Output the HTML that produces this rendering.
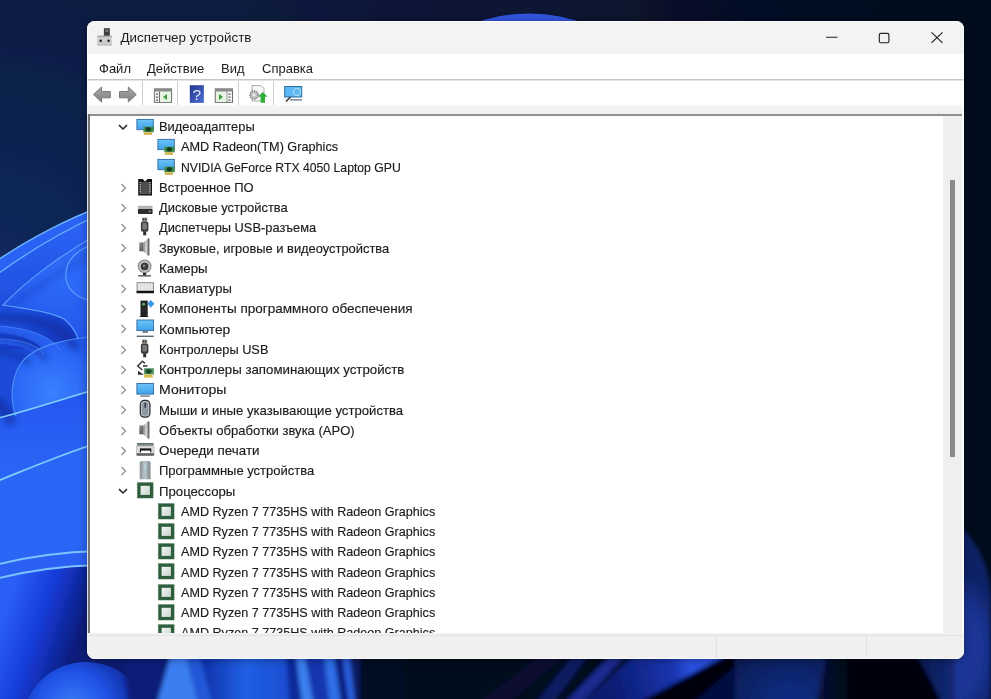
<!DOCTYPE html>
<html><head><meta charset="utf-8">
<style>
html,body{margin:0;padding:0;width:991px;height:699px;overflow:hidden;background:#0b1a3a;}
body{position:relative;font-family:"Liberation Sans",sans-serif;}
#wp{position:absolute;left:0;top:0;width:991px;height:699px;}
#win{position:absolute;left:87px;top:21px;width:877px;height:638px;border-radius:8px;background:#f3f3f3;overflow:hidden;}
.abs{position:absolute;}
#titlebar{position:absolute;left:0;width:878px;top:-1px;height:34px;background:#f3f3f3;}
#title{position:absolute;left:33.5px;top:10px;font-size:13.4px;color:#1b1b1b;white-space:nowrap;}
#menubar{position:absolute;left:0;width:878px;top:33px;height:25px;background:#fff;border-bottom:1px solid #c6c6c6;box-shadow:0 1px 0 #e4e4e4;}
.mi{position:absolute;top:7.2px;font-size:13px;color:#1b1b1b;white-space:nowrap;}
#toolbar{position:absolute;left:0;width:878px;top:60px;height:24px;background:#fff;}
#band{position:absolute;left:0;width:878px;top:84px;height:9px;background:linear-gradient(#f7f7f7,#eeeeee);}
#tree{position:absolute;left:0;width:878px;top:93px;height:519px;background:#fff;overflow:hidden;}
#tree .bt{position:absolute;left:0;top:0;width:875px;height:2px;background:#8f8f8f;}
#tree .bl0{position:absolute;left:0;top:0;width:1px;height:519px;background:#aab4cc;}
#tree .bl{position:absolute;left:1px;top:0;width:2px;height:519px;background:#747474;}
.t{position:absolute;font-size:13px;color:#1b1b1b;-webkit-text-stroke:0.15px #1b1b1b;white-space:nowrap;transform-origin:0 0;line-height:normal;}
.ic{position:absolute;overflow:visible;}
#sb{position:absolute;left:856px;top:2px;width:19px;height:517px;background:#efefef;}
#thumb{position:absolute;left:7px;top:64px;width:5px;height:277px;background:#8a8a8a;}
#status{position:absolute;left:0;width:878px;top:612px;height:26px;background:#f0f0f0;}
#status .sl{position:absolute;left:0;top:2px;width:878px;height:1px;background:#e2e2e2;}
#status .sep{position:absolute;top:3px;width:1px;height:23px;background:#e0e0e0;}
#win{box-shadow:0 1px 8px rgba(0,0,0,0.35);}
#edge{position:absolute;left:0;top:0;width:875px;height:636px;border:1px solid rgba(255,255,255,0.6);border-radius:8px;pointer-events:none;}
#rstrip{position:absolute;left:875px;top:86px;width:2px;height:552px;background:#fafafa;}

</style></head><body>
<svg id="wp" width="991" height="699" viewBox="0 0 991 699">
<defs>
<radialGradient id="gbg" cx="0" cy="260" r="1000" gradientUnits="userSpaceOnUse">
<stop offset="0" stop-color="#12295c"/><stop offset="0.25" stop-color="#0c1d44"/><stop offset="0.6" stop-color="#081431"/><stop offset="1" stop-color="#040a1a"/>
</radialGradient>
<radialGradient id="gpet" cx="52" cy="392" r="55" gradientUnits="userSpaceOnUse">
<stop offset="0" stop-color="#3a80ff"/><stop offset="1" stop-color="#245cf0"/>
</radialGradient>
<radialGradient id="gleaf" cx="60" cy="270" r="70" gradientUnits="userSpaceOnUse">
<stop offset="0" stop-color="#2f6cf8"/><stop offset="1" stop-color="#2458ec"/>
</radialGradient>
<linearGradient id="glow" x1="10" y1="600" x2="85" y2="625" gradientUnits="userSpaceOnUse">
<stop offset="0" stop-color="#2a5ef6"/><stop offset="0.45" stop-color="#163cd8"/><stop offset="1" stop-color="#0a1a78"/>
</linearGradient>
<radialGradient id="gsph" cx="72" cy="708" r="72" gradientUnits="userSpaceOnUse">
<stop offset="0" stop-color="#3a7ef8"/><stop offset="0.5" stop-color="#2052e6"/><stop offset="1" stop-color="#0c2490"/>
</radialGradient>
<radialGradient id="grsph" cx="790" cy="710" r="90" gradientUnits="userSpaceOnUse">
<stop offset="0" stop-color="#12308a"/><stop offset="1" stop-color="#081748"/>
</radialGradient>
<linearGradient id="grib2" x1="0" y1="230" x2="0" y2="320" gradientUnits="userSpaceOnUse"><stop offset="0" stop-color="#2a62f4"/><stop offset="1" stop-color="#1c4ad8"/></linearGradient>
<radialGradient id="gell" cx="95" cy="272" r="35" gradientUnits="userSpaceOnUse"><stop offset="0" stop-color="#2a64f6"/><stop offset="1" stop-color="#2e6af8"/></radialGradient>
<linearGradient id="gshade" x1="0" y1="308" x2="20" y2="350" gradientUnits="userSpaceOnUse"><stop offset="0" stop-color="#2256ea"/><stop offset="1" stop-color="#173cc4"/></linearGradient>
<linearGradient id="gband1" x1="0" y1="400" x2="0" y2="480" gradientUnits="userSpaceOnUse"><stop offset="0" stop-color="#2458f0"/><stop offset="1" stop-color="#2c66f6"/></linearGradient>
<radialGradient id="grs" cx="920" cy="650" r="90" gradientUnits="userSpaceOnUse"><stop offset="0" stop-color="#1e3ca6"/><stop offset="0.7" stop-color="#1a3494"/><stop offset="1" stop-color="#0e2266"/></radialGradient>
<linearGradient id="gband" x1="610" y1="690" x2="690" y2="665" gradientUnits="userSpaceOnUse"><stop offset="0" stop-color="#0a1a70"/><stop offset="0.8" stop-color="#1a36b0"/><stop offset="1" stop-color="#2a50e0"/></linearGradient>
<linearGradient id="gmid" x1="200" y1="0" x2="290" y2="0" gradientUnits="userSpaceOnUse"><stop offset="0" stop-color="#0e2ea8"/><stop offset="0.5" stop-color="#2060e4"/><stop offset="1" stop-color="#1a4cd0"/></linearGradient>
<filter id="blur3" x="-0.5" y="-0.5" width="2" height="2"><feGaussianBlur stdDeviation="3"/></filter>
<filter id="soft" x="-0.02" y="-0.02" width="1.04" height="1.04"><feGaussianBlur stdDeviation="0.7"/></filter>
<filter id="soft2" x="-0.1" y="-0.1" width="1.2" height="1.2"><feGaussianBlur stdDeviation="2"/></filter>
<linearGradient id="gblk" x1="815" y1="0" x2="905" y2="0" gradientUnits="userSpaceOnUse"><stop offset="0" stop-color="#081540"/><stop offset="0.4" stop-color="#02050f"/><stop offset="1" stop-color="#02040c"/></linearGradient>
<linearGradient id="gbr" x1="905" y1="0" x2="991" y2="0" gradientUnits="userSpaceOnUse"><stop offset="0" stop-color="#091646"/><stop offset="1" stop-color="#1a3698"/></linearGradient>
</defs>
<g filter="url(#soft)">
<rect x="-10" y="-10" width="1011" height="719" fill="url(#gbg)"/>
<!-- top arc peeking -->
<circle cx="529" cy="173.4" r="160" fill="#3354e0"/>
<!-- left bloom -->
<path d="M100 207 C70 218 30 238 -5 262 L-5 710 L100 710 Z" fill="#2a62f4"/>
<path d="M100 214 C70 228 30 250 -5 276 L-5 710 L100 710 Z" fill="url(#grib2)"/>
<path d="M100 233 C60 255 25 282 3 305 C25 309 50 311 64 319 C70 324 75 330 78 338 L100 340 Z" fill="url(#gleaf)"/>
<path d="M100 243 C75 248 65 262 66 277 C67 292 80 300 100 303 Z" fill="url(#gell)"/>
<path d="M-5 308 C25 304 50 311 64 319 C70 324 75 330 78 338 L100 336 L100 345 L-5 350 Z" fill="url(#gshade)"/>
<path d="M-5 333 C15 334 35 338 47 354 L60 350 C50 335 25 327 -5 326 Z" fill="#2a62f2" opacity="0.9"/>
<path d="M-5 344 C10 344 28 347 36 356 L44 354 C35 342 15 339 -5 339 Z" fill="#2a62f2" opacity="0.8"/>
<path d="M100 336 C70 338 35 345 22 362 C10 378 10 400 16 416 L-5 420 L-5 710 L100 710 Z" fill="url(#gpet)"/>
<path d="M-5 419 C30 410 60 400 100 388 L100 710 L-5 710 Z" fill="url(#gband1)"/>
<path d="M-5 482 C30 468 60 455 100 442 L100 710 L-5 710 Z" fill="#2b66f6"/>
<path d="M-5 565 C30 556 60 552 100 551 L100 710 L-5 710 Z" fill="#2960f4"/>
<path d="M-5 579 C30 570 60 566 100 565 L100 710 L-5 710 Z" fill="url(#glow)"/>
<rect x="87" y="640" width="70" height="59" fill="#0a1a70"/><circle cx="86" cy="726" r="64" fill="url(#gsph)"/>
<g fill="none" stroke="#0c2590" filter="url(#blur3)" opacity="0.55">
<path d="M-5 318 C25 316 50 322 62 332 C70 338 74 344 76 350" stroke-width="8"/>
<path d="M-5 336 C15 337 35 343 46 360" stroke-width="5"/>
<path d="M-5 352 C10 352 22 356 30 364" stroke-width="5"/>
<path d="M-5 400 C3 405 8 415 12 424" stroke-width="10"/>
<path d="M100 250 C60 270 25 295 0 315" stroke-width="6" opacity="0.4"/>
</g>
<g fill="none" stroke="#6ab4ff" stroke-width="1.5">
<path d="M100 207 C70 218 30 238 -5 262"/>
<path d="M100 214 C70 228 30 250 -5 276" stroke-width="1.3"/>
<path d="M100 233 C60 255 25 282 3 305 C25 309 50 311 64 319 C70 324 75 330 78 338" stroke-width="1.2" stroke="#5aa0ff"/>
<path d="M100 243 C75 248 65 262 66 277 C67 292 80 300 100 303" stroke-width="1.2" stroke="#5aa0ff"/>
<path d="M-5 326 C25 327 50 335 60 350" stroke-width="1" stroke="#4f8cff" opacity="0.7"/>
<path d="M-5 339 C15 339 35 342 44 354" stroke-width="1" stroke="#4f8cff" opacity="0.6"/>
<path d="M100 336 C70 338 35 345 22 362 C10 378 10 400 16 416" stroke-width="1.1" stroke="#5aa0ff" opacity="0.8"/>
<path d="M-5 419 C30 410 60 400 100 388" stroke="#7fd0ff" stroke-width="1.7"/>
<path d="M-5 482 C30 468 60 455 100 442" stroke="#7fd0ff" stroke-width="1.7"/>
<path d="M-5 565 C30 556 60 552 100 551" stroke="#7cc4ff" stroke-width="1.8"/>
<path d="M-5 579 C30 570 60 566 100 565" stroke="#7cc4ff" stroke-width="1.8"/>
</g>
<!-- bottom strip -->
</g>
<g filter="url(#soft2)">
<path d="M120 640 L175 640 L160 710 L130 710 Z" fill="#0a1c78"/>
<path d="M175 640 L182 640 L200 710 L155 710 Z" fill="#3a7ef2"/>
<path d="M182 640 L195 640 L215 710 L200 710 Z" fill="#2458d8"/>
<path d="M195 640 L290 640 L290 710 L215 710 Z" fill="url(#gmid)"/>
<path d="M285 640 L298 640 L305 710 L290 710 Z" fill="#0c2a9a"/>
<path d="M294 640 L302 640 L315 710 L303 710 Z" fill="#3a80f0"/>
<path d="M302 640 L322 640 L330 710 L315 710 Z" fill="#1434b0"/>
<path d="M322 640 L332 640 L342 710 L330 710 Z" fill="#2f70ea"/>
<path d="M332 640 L345 640 L352 710 L342 710 Z" fill="#0a1e80"/>
<path d="M340 640 L348 640 L356 710 L350 710 Z" fill="#2a60e0"/>
<path d="M348 640 L362 640 L362 710 L356 710 Z" fill="#081a60"/>
<rect x="360" y="640" width="48" height="70" fill="#030820"/>
<rect x="405" y="640" width="300" height="70" fill="#03071a"/>
<path d="M470 710 L560 640 L585 640 L500 710 Z" fill="#081034" opacity="0.9"/>
<path d="M530 710 L585 640 L600 640 L548 710 Z" fill="#0c1a60"/>
<path d="M558 710 L625 640 L640 640 L575 710 Z" fill="#1a2a90"/>
<path d="M575 710 L650 640 L755 640 L625 710 Z" fill="url(#gband)"/>
<path d="M625 710 L755 640 L765 640 L685 710 Z" fill="#02050f"/>
<path d="M685 710 L765 640 L790 640 L740 710 Z" fill="#061040"/>
<rect x="735" y="640" width="120" height="70" fill="url(#grsph)"/>
<path d="M830 640 L905 640 Q925 665 945 710 L815 710 Z" fill="url(#gblk)"/>
<path d="M905 640 L991 640 L991 710 L945 710 Q925 665 905 640 Z" fill="url(#gbr)"/>
<!-- right strip -->
<path d="M955 522 C975 538 988 562 991 592 L991 710 L955 710 Z" fill="url(#grs)"/>
</g>
</svg>

<svg width="0" height="0" style="position:absolute"><defs>
<linearGradient id="gmon" x1="0" y1="0" x2="0" y2="1"><stop offset="0" stop-color="#6cc4f8"/><stop offset="1" stop-color="#3fa2ea"/></linearGradient>
<linearGradient id="ggray" x1="0" y1="0" x2="1" y2="0"><stop offset="0" stop-color="#6e6e6e"/><stop offset="0.5" stop-color="#c9c9c9"/><stop offset="1" stop-color="#8a8a8a"/></linearGradient>
<linearGradient id="gswd" x1="0" y1="0" x2="1" y2="0"><stop offset="0" stop-color="#8a9296"/><stop offset="0.5" stop-color="#b9c8cc"/><stop offset="1" stop-color="#7d8588"/></linearGradient>
<linearGradient id="gspk1" x1="0" y1="0" x2="1" y2="1"><stop offset="0" stop-color="#9a9a9a"/><stop offset="1" stop-color="#4a4a4a"/></linearGradient>
<linearGradient id="gspk2" x1="0" y1="0" x2="1" y2="0"><stop offset="0" stop-color="#8a8a8a"/><stop offset="0.45" stop-color="#d6d6d6"/><stop offset="1" stop-color="#9a9a9a"/></linearGradient>
<linearGradient id="gcpu" x1="0" y1="0" x2="1" y2="1"><stop offset="0" stop-color="#f0f6f2"/><stop offset="0.5" stop-color="#dfe6e2"/><stop offset="1" stop-color="#c9d6cf"/></linearGradient>
<g id="i-video">
 <rect x="0.9" y="1.4" width="16.4" height="10.3" fill="url(#gmon)" stroke="#2d6aa0" stroke-width="0.9"/>
 <rect x="7.4" y="8.7" width="10.3" height="5.6" fill="#3f8a48"/>
 <ellipse cx="12.3" cy="11.2" rx="2.6" ry="2.2" fill="#123d22"/>
 <rect x="7.8" y="14.3" width="8.2" height="2.6" fill="#d6b54e"/>
</g>
<g id="i-fw">
 <path d="M2.2 0 H6.6 L9.1 2.6 L11.6 0 H16 V16.5 H2.2 Z" fill="#121212"/>
 <rect x="3.7" y="3" width="11" height="11.6" fill="#d8d8d8"/>
 <g fill="#121212"><rect x="3.7" y="4" width="1.2" height="1"/><rect x="3.7" y="6.2" width="1.2" height="1"/><rect x="3.7" y="8.4" width="1.2" height="1"/><rect x="3.7" y="10.6" width="1.2" height="1"/><rect x="3.7" y="12.8" width="1.2" height="1"/>
 <rect x="13.5" y="4" width="1.2" height="1"/><rect x="13.5" y="6.2" width="1.2" height="1"/><rect x="13.5" y="8.4" width="1.2" height="1"/><rect x="13.5" y="10.6" width="1.2" height="1"/><rect x="13.5" y="12.8" width="1.2" height="1"/></g>
 <rect x="4.9" y="2.8" width="8.6" height="12" fill="#4e4e4e"/>
</g>
<g id="i-disk">
 <rect x="1.9" y="6.7" width="14.7" height="3.6" rx="1" fill="#b4b4b4"/>
 <rect x="1.9" y="10.1" width="14.7" height="5" rx="1" fill="#2f2f2f"/>
 <rect x="12.5" y="11.6" width="2.5" height="1.6" fill="#6f8f74"/>
</g>
<g id="i-usb">
 <rect x="6" y="-1.4" width="5.2" height="4" fill="#8a8a8a"/>
 <rect x="6.8" y="-0.4" width="1.4" height="1.6" fill="#333"/><rect x="9" y="-0.4" width="1.4" height="1.6" fill="#333"/>
 <rect x="4.9" y="2.4" width="7.5" height="10.4" rx="2" fill="#3c3c3c"/>
 <rect x="6.4" y="4" width="4.5" height="6.5" rx="1" fill="#7a7a7a"/>
 <rect x="7.2" y="12.4" width="3" height="3.9" fill="#2f2f2f"/>
</g>
<g id="i-spk">
 <rect x="3.2" y="3.4" width="4.4" height="8.9" fill="url(#gspk1)"/>
 <path d="M7.6 3.4 L11.6 -0.4 H13.3 V16.4 H11.6 L7.6 12.3 Z" fill="url(#gspk2)"/>
 <rect x="11.7" y="-0.4" width="1.6" height="16.8" fill="#6a6a6a"/>
</g>
<g id="i-cam">
 <circle cx="8.6" cy="6.4" r="6.9" fill="#8d8d8d"/>
 <circle cx="8.6" cy="6.4" r="5.6" fill="#cfcfcf"/>
 <circle cx="8.6" cy="6.4" r="3.9" fill="#3e3e3e"/>
 <circle cx="8.1" cy="5.8" r="1.2" fill="#8a8a8a"/>
 <rect x="7" y="13" width="3.2" height="2" fill="#2a2a2a"/>
 <rect x="2.3" y="15" width="12.6" height="1.6" fill="#6a6a6a"/>
</g>
<g id="i-kbd">
 <rect x="0.6" y="2.2" width="17.4" height="10.9" fill="#8a8a8a"/>
 <rect x="1.5" y="3.1" width="15.6" height="7.6" fill="#d2d2d2"/>
 <g fill="#f4f4f4"><rect x="2.2" y="3.8" width="14.2" height="1.6"/><rect x="2.2" y="6.1" width="14.2" height="1.6"/><rect x="2.2" y="8.4" width="14.2" height="1.6"/></g>
 <path d="M5 3.8 V10 M8.2 3.8 V10 M11.4 3.8 V10 M14 3.8 V10" stroke="#bdbdbd" stroke-width="0.5"/>
 <rect x="0.6" y="10.9" width="17.4" height="2.3" fill="#141414"/>
</g>
<g id="i-swc">
 <rect x="4.5" y="0.6" width="7.2" height="15.2" fill="#1f1f1f"/>
 <ellipse cx="7.6" cy="4.2" rx="1.6" ry="1.8" fill="#5a9a5e"/>
 <rect x="5.5" y="8" width="5" height="0.8" fill="#3c3c3c"/><rect x="5.5" y="10.5" width="5" height="0.8" fill="#3c3c3c"/>
 <path d="M3.5 17 Q3.8 15.2 8 15.2 Q12.2 15.2 12.5 17 Z" fill="#141414"/>
 <path d="M11.8 2.6 H13.6 V0.6 H15.8 V2.6 H17.9 V5 H15.8 V7.3 H13.6 V5 H11.8 Z" fill="#3a96e6"/>
 <rect x="12.8" y="1.8" width="4" height="4" fill="#3a96e6"/>
</g>
<g id="i-mon">
 <rect x="0.9" y="-0.0" width="16.7" height="10.6" fill="url(#gmon)" stroke="#2d6aa0" stroke-width="0.9"/>
 <rect x="6.5" y="11.2" width="5.5" height="1.6" fill="#5a6f80"/>
 <rect x="0.7" y="15.6" width="17.1" height="1.4" fill="#5d6d78"/>
</g>
<g id="i-monitor">
 <rect x="0.9" y="2.5" width="16.7" height="10.6" fill="url(#gmon)" stroke="#2d6aa0" stroke-width="0.9"/>
 <rect x="4.3" y="14.4" width="9.6" height="1.3" fill="#5a6f80"/>
</g>
<g id="i-stor">
 <path d="M8.9 2.4 L6.4 0.3 L1.7 5 L6.4 9" fill="none" stroke="#3a3a3a" stroke-width="1.5"/>
 <rect x="7" y="4" width="4.4" height="1.9" fill="#5a5a5a"/>
 <path d="M2 9.7 L7.9 13.8 L2 13.8 Z" fill="#2e2e2e"/>
 <rect x="7.9" y="7.2" width="10.1" height="6.3" fill="#5c9a6a"/>
 <ellipse cx="12.6" cy="10.3" rx="3" ry="2.4" fill="#1a4a2c"/>
 <rect x="8.2" y="13.5" width="8.5" height="3.1" fill="#d9bd4a"/>
</g>
<g id="i-mouse">
 <rect x="3.7" y="-1.2" width="10.8" height="18" rx="4.6" fill="#2b2b2b"/>
 <rect x="4.9" y="0" width="8.4" height="15.6" rx="3.6" fill="#c7ccd3"/>
 <rect x="5.8" y="0.9" width="6.6" height="13.8" rx="3" fill="#8d96a3"/>
 <rect x="8.5" y="1.6" width="1.4" height="5.4" rx="0.7" fill="#2a3340"/>
</g>
<g id="i-prn">
 <rect x="0.9" y="1.2" width="16.8" height="2.8" rx="1" fill="#8d9892"/>
 <rect x="0.9" y="1.2" width="16.8" height="1.1" rx="0.5" fill="#4f5a54"/>
 <rect x="0.6" y="4" width="17.4" height="7.4" fill="#dedede" stroke="#9a9a9a" stroke-width="0.5"/>
 <rect x="3.9" y="6.4" width="11.4" height="4" fill="#161616"/>
 <rect x="5" y="8.6" width="9.2" height="3" fill="#ffffff"/>
 <rect x="0.4" y="11.2" width="17.8" height="2.6" rx="0.8" fill="#5e5e5e"/>
</g>
<g id="i-swd">
 <path d="M3.7 1.2 Q3.7 -1 6 -1 H12.2 Q14.5 -1 14.5 1.2 V17.2 H3.7 Z" fill="url(#gswd)"/>
 <rect x="8.3" y="2" width="1.6" height="6" fill="#b8dce8" opacity="0.7"/>
</g>
<g id="i-cpu">
 <rect x="1.3" y="0.5" width="15.9" height="15.6" fill="#2e5e3c"/>
 <rect x="1.3" y="0.5" width="15.9" height="15.6" fill="none" stroke="#4a7a58" stroke-width="0.7" stroke-dasharray="0.7 0.9"/>
 <rect x="4.6" y="3.8" width="9.3" height="9.1" fill="url(#gcpu)"/>
</g>

</defs></svg>
<div id="win">
  <div id="titlebar">
  <svg class="abs" style="left:0;top:0" width="40" height="34" viewBox="0 0 40 34">
<defs><linearGradient id="gti" x1="0" y1="0" x2="0" y2="1"><stop offset="0" stop-color="#9a9a9a"/><stop offset="0.25" stop-color="#d4d4d4"/><stop offset="1" stop-color="#c4c4c4"/></linearGradient></defs>
<rect x="16.9" y="8.2" width="5.9" height="8" fill="#3e3e3e"/>
<rect x="18.3" y="9.6" width="3" height="2.2" fill="#7a7a7a"/>
<rect x="10.2" y="15.6" width="14.6" height="10.2" fill="url(#gti)"/>
<circle cx="13.7" cy="20.8" r="1.2" fill="#1a1a1a"/>
<circle cx="21.6" cy="20.8" r="1.2" fill="#1a1a1a"/>
</svg>

  <div id="title">Диспетчер устройств</div>
  <svg class="abs" style="left:736px;top:10px" width="20" height="14" viewBox="0 0 20 14"><path d="M3 7.3 H14.5" stroke="#222" stroke-width="1.1"/></svg>
  <svg class="abs" style="left:789.5px;top:9.6px" width="16" height="16" viewBox="0 0 16 16"><rect x="2.3" y="3.3" width="9.6" height="9.4" rx="1.5" fill="none" stroke="#222" stroke-width="1.15"/></svg>
  <svg class="abs" style="left:842px;top:10px" width="16" height="16" viewBox="0 0 16 16"><path d="M2.5 2.3 L13.5 12.9 M13.5 2.3 L2.5 12.9" stroke="#222" stroke-width="1.15"/></svg>
  </div>
  <div id="menubar">
    <div class="mi" style="left:12px">Файл</div>
    <div class="mi" style="left:60px">Действие</div>
    <div class="mi" style="left:134px">Вид</div>
    <div class="mi" style="left:175px">Справка</div>
  </div>
  <div id="toolbar">
  <svg class="abs" style="left:0;top:-1px;overflow:visible" width="877" height="27" viewBox="0 0 877 27">
<defs>
<linearGradient id="garr" x1="0" y1="0" x2="0" y2="1"><stop offset="0" stop-color="#a8a8a8"/><stop offset="1" stop-color="#808080"/></linearGradient>
<linearGradient id="ghelp" x1="0" y1="0" x2="1" y2="1"><stop offset="0" stop-color="#23388c"/><stop offset="1" stop-color="#4d6fd4"/></linearGradient>
</defs>
<g stroke="#cfcfcf" stroke-width="1"><path d="M55.5 1 V25.5 M90.5 1 V25.5 M151.5 1 V25.5 M186.5 1 V25.5"/></g>
<!-- back -->
<path d="M6.5 14.5 L14.5 7 V11.5 H23.3 V17.8 H14.5 V22 Z" fill="url(#garr)" stroke="#7a7a7a" stroke-width="1" stroke-linejoin="round"/>
<!-- forward -->
<path d="M49.3 14.5 L41.3 7 V11.5 H32.5 V17.8 H41.3 V22 Z" fill="url(#garr)" stroke="#7a7a7a" stroke-width="1" stroke-linejoin="round"/>
<!-- icon3 -->
<rect x="67.4" y="8.9" width="17.2" height="13.5" fill="#f4f4f4" stroke="#6d6d6d" stroke-width="1"/>
<rect x="67.4" y="8.9" width="17.2" height="2.6" fill="#8a8a8a"/>
<path d="M72.5 11.5 V22.4" stroke="#6d6d6d" stroke-width="1"/>
<rect x="69" y="13.5" width="2" height="1.2" fill="#555"/><rect x="69" y="16.5" width="2" height="1.2" fill="#555"/><rect x="69" y="19.5" width="2" height="1.2" fill="#555"/>
<rect x="73" y="12" width="11" height="10" fill="#e6f4e4"/>
<path d="M76 17 L80 14 V20 Z" fill="#3f9a3f"/>
<!-- help -->
<rect x="102.8" y="5.2" width="14.1" height="17.7" fill="url(#ghelp)"/>
<text x="109.9" y="19.6" font-family="Liberation Sans" font-size="15.5" fill="#dfe8ff" text-anchor="middle">?</text>
<!-- icon5 -->
<rect x="128.3" y="8.9" width="17.2" height="13.5" fill="#f4f4f4" stroke="#6d6d6d" stroke-width="1"/>
<rect x="128.3" y="8.9" width="17.2" height="2.6" fill="#8a8a8a"/>
<path d="M139.8 11.5 V22.4" stroke="#6d6d6d" stroke-width="1"/>
<rect x="129" y="12" width="10.5" height="10" fill="#e6f4e4"/>
<path d="M136 17 L132 14 V20 Z" fill="#3f9a3f"/>
<rect x="141.5" y="13.5" width="2" height="1.2" fill="#555"/><rect x="141.5" y="16.5" width="2" height="1.2" fill="#555"/><rect x="141.5" y="19.5" width="2" height="1.2" fill="#555"/>
<!-- icon6 update driver -->
<path d="M165 5.5 H174 L177 8.5 V21 H165 Z" fill="#f6f6f6" stroke="#9a9a9a" stroke-width="0.8"/>
<circle cx="167" cy="15" r="4.2" fill="#bdbdbd" stroke="#7a7a7a" stroke-width="1.2" stroke-dasharray="1.4 1"/>
<circle cx="167" cy="15" r="1.6" fill="#f0f0f0"/>
<path d="M175.8 12 L180.6 16.8 H178 V22.8 H173.6 V16.8 H171 Z" fill="#2fae3a"/>
<!-- icon7 scan -->
<rect x="197.7" y="6.5" width="17" height="10.5" fill="#5cb8f2" stroke="#2f6c9c" stroke-width="1"/>
<circle cx="210" cy="11.8" r="3.6" fill="none" stroke="#a8dcfa" stroke-width="1.1"/>
<path d="M203.5 17 L199 21.5" stroke="#3a3a3a" stroke-width="1.6"/>
<path d="M203 19.8 H215" stroke="#607080" stroke-width="1.3"/>
</svg>

  </div>
  <div id="band"></div>
  <div id="tree">
    <div class="bt"></div><div class="bl0"></div><div class="bl"></div>
    <span class="t" style="left:72px;top:5.13px;transform:scaleX(0.9894)">Видеоадаптеры</span><svg class="ic" style="left:48.5px;top:3.9px" width="18" height="18" viewBox="0 0 18 18"><use href="#i-video"/></svg><svg class="ic" style="left:29.8px;top:7.9px" width="12" height="10" viewBox="0 0 12 10"><path d="M2 3.2 L6 7 L10 3.2" fill="none" stroke="#2b2b2b" stroke-width="1.6"/></svg><span class="t" style="left:94px;top:25.38px;transform:scaleX(0.9752)">AMD Radeon(TM) Graphics</span><svg class="ic" style="left:69.5px;top:24.15px" width="18" height="18" viewBox="0 0 18 18"><use href="#i-video"/></svg><span class="t" style="left:94px;top:45.63px;transform:scaleX(0.9397)">NVIDIA GeForce RTX 4050 Laptop GPU</span><svg class="ic" style="left:69.5px;top:44.4px" width="18" height="18" viewBox="0 0 18 18"><use href="#i-video"/></svg><span class="t" style="left:72px;top:65.88px;transform:scaleX(1.0001)">Встроенное ПО</span><svg class="ic" style="left:48.5px;top:64.65px" width="18" height="18" viewBox="0 0 18 18"><use href="#i-fw"/></svg><svg class="ic" style="left:31px;top:68.65px" width="12" height="10" viewBox="0 0 12 10"><path d="M3.5 1 L7.5 5 L3.5 9" fill="none" stroke="#8f8f8f" stroke-width="1.25"/></svg><span class="t" style="left:72px;top:86.13px;transform:scaleX(0.9922)">Дисковые устройства</span><svg class="ic" style="left:48.5px;top:84.9px" width="18" height="18" viewBox="0 0 18 18"><use href="#i-disk"/></svg><svg class="ic" style="left:31px;top:88.9px" width="12" height="10" viewBox="0 0 12 10"><path d="M3.5 1 L7.5 5 L3.5 9" fill="none" stroke="#8f8f8f" stroke-width="1.25"/></svg><span class="t" style="left:72px;top:106.38px;transform:scaleX(0.9874)">Диспетчеры USB-разъема</span><svg class="ic" style="left:48.5px;top:105.15px" width="18" height="18" viewBox="0 0 18 18"><use href="#i-usb"/></svg><svg class="ic" style="left:31px;top:109.15px" width="12" height="10" viewBox="0 0 12 10"><path d="M3.5 1 L7.5 5 L3.5 9" fill="none" stroke="#8f8f8f" stroke-width="1.25"/></svg><span class="t" style="left:72px;top:126.63px;transform:scaleX(0.9913)">Звуковые, игровые и видеоустройства</span><svg class="ic" style="left:48.5px;top:125.4px" width="18" height="18" viewBox="0 0 18 18"><use href="#i-spk"/></svg><svg class="ic" style="left:31px;top:129.4px" width="12" height="10" viewBox="0 0 12 10"><path d="M3.5 1 L7.5 5 L3.5 9" fill="none" stroke="#8f8f8f" stroke-width="1.25"/></svg><span class="t" style="left:72px;top:146.88px;transform:scaleX(1.022)">Камеры</span><svg class="ic" style="left:48.5px;top:145.65px" width="18" height="18" viewBox="0 0 18 18"><use href="#i-cam"/></svg><svg class="ic" style="left:31px;top:149.65px" width="12" height="10" viewBox="0 0 12 10"><path d="M3.5 1 L7.5 5 L3.5 9" fill="none" stroke="#8f8f8f" stroke-width="1.25"/></svg><span class="t" style="left:72px;top:167.13px;transform:scaleX(1.0031)">Клавиатуры</span><svg class="ic" style="left:48.5px;top:165.9px" width="18" height="18" viewBox="0 0 18 18"><use href="#i-kbd"/></svg><svg class="ic" style="left:31px;top:169.9px" width="12" height="10" viewBox="0 0 12 10"><path d="M3.5 1 L7.5 5 L3.5 9" fill="none" stroke="#8f8f8f" stroke-width="1.25"/></svg><span class="t" style="left:72px;top:187.38px;transform:scaleX(1.0372)">Компоненты программного обеспечения</span><svg class="ic" style="left:48.5px;top:186.15px" width="18" height="18" viewBox="0 0 18 18"><use href="#i-swc"/></svg><svg class="ic" style="left:31px;top:190.15px" width="12" height="10" viewBox="0 0 12 10"><path d="M3.5 1 L7.5 5 L3.5 9" fill="none" stroke="#8f8f8f" stroke-width="1.25"/></svg><span class="t" style="left:72px;top:207.63px;transform:scaleX(1.0586)">Компьютер</span><svg class="ic" style="left:48.5px;top:206.4px" width="18" height="18" viewBox="0 0 18 18"><use href="#i-mon"/></svg><svg class="ic" style="left:31px;top:210.4px" width="12" height="10" viewBox="0 0 12 10"><path d="M3.5 1 L7.5 5 L3.5 9" fill="none" stroke="#8f8f8f" stroke-width="1.25"/></svg><span class="t" style="left:72px;top:227.88px;transform:scaleX(0.9817)">Контроллеры USB</span><svg class="ic" style="left:48.5px;top:226.65px" width="18" height="18" viewBox="0 0 18 18"><use href="#i-usb"/></svg><svg class="ic" style="left:31px;top:230.65px" width="12" height="10" viewBox="0 0 12 10"><path d="M3.5 1 L7.5 5 L3.5 9" fill="none" stroke="#8f8f8f" stroke-width="1.25"/></svg><span class="t" style="left:72px;top:248.13px;transform:scaleX(1.0201)">Контроллеры запоминающих устройств</span><svg class="ic" style="left:48.5px;top:246.9px" width="18" height="18" viewBox="0 0 18 18"><use href="#i-stor"/></svg><svg class="ic" style="left:31px;top:250.9px" width="12" height="10" viewBox="0 0 12 10"><path d="M3.5 1 L7.5 5 L3.5 9" fill="none" stroke="#8f8f8f" stroke-width="1.25"/></svg><span class="t" style="left:72px;top:268.38px;transform:scaleX(1.0833)">Мониторы</span><svg class="ic" style="left:48.5px;top:267.15px" width="18" height="18" viewBox="0 0 18 18"><use href="#i-monitor"/></svg><svg class="ic" style="left:31px;top:271.15px" width="12" height="10" viewBox="0 0 12 10"><path d="M3.5 1 L7.5 5 L3.5 9" fill="none" stroke="#8f8f8f" stroke-width="1.25"/></svg><span class="t" style="left:72px;top:288.63px;transform:scaleX(1.0117)">Мыши и иные указывающие устройства</span><svg class="ic" style="left:48.5px;top:287.4px" width="18" height="18" viewBox="0 0 18 18"><use href="#i-mouse"/></svg><svg class="ic" style="left:31px;top:291.4px" width="12" height="10" viewBox="0 0 12 10"><path d="M3.5 1 L7.5 5 L3.5 9" fill="none" stroke="#8f8f8f" stroke-width="1.25"/></svg><span class="t" style="left:72px;top:308.88px;transform:scaleX(1.002)">Объекты обработки звука (APO)</span><svg class="ic" style="left:48.5px;top:307.65px" width="18" height="18" viewBox="0 0 18 18"><use href="#i-spk"/></svg><svg class="ic" style="left:31px;top:311.65px" width="12" height="10" viewBox="0 0 12 10"><path d="M3.5 1 L7.5 5 L3.5 9" fill="none" stroke="#8f8f8f" stroke-width="1.25"/></svg><span class="t" style="left:72px;top:329.13px;transform:scaleX(1.0311)">Очереди печати</span><svg class="ic" style="left:48.5px;top:327.9px" width="18" height="18" viewBox="0 0 18 18"><use href="#i-prn"/></svg><svg class="ic" style="left:31px;top:331.9px" width="12" height="10" viewBox="0 0 12 10"><path d="M3.5 1 L7.5 5 L3.5 9" fill="none" stroke="#8f8f8f" stroke-width="1.25"/></svg><span class="t" style="left:72px;top:349.38px;transform:scaleX(1.0001)">Программные устройства</span><svg class="ic" style="left:48.5px;top:348.15px" width="18" height="18" viewBox="0 0 18 18"><use href="#i-swd"/></svg><svg class="ic" style="left:31px;top:352.15px" width="12" height="10" viewBox="0 0 12 10"><path d="M3.5 1 L7.5 5 L3.5 9" fill="none" stroke="#8f8f8f" stroke-width="1.25"/></svg><span class="t" style="left:72px;top:369.63px;transform:scaleX(1.0137)">Процессоры</span><svg class="ic" style="left:48.5px;top:368.4px" width="18" height="18" viewBox="0 0 18 18"><use href="#i-cpu"/></svg><svg class="ic" style="left:29.8px;top:372.4px" width="12" height="10" viewBox="0 0 12 10"><path d="M2 3.2 L6 7 L10 3.2" fill="none" stroke="#2b2b2b" stroke-width="1.6"/></svg><span class="t" style="left:94px;top:389.88px;transform:scaleX(0.9692)">AMD Ryzen 7 7735HS with Radeon Graphics</span><svg class="ic" style="left:69.5px;top:388.65px" width="18" height="18" viewBox="0 0 18 18"><use href="#i-cpu"/></svg><span class="t" style="left:94px;top:410.13px;transform:scaleX(0.9692)">AMD Ryzen 7 7735HS with Radeon Graphics</span><svg class="ic" style="left:69.5px;top:408.9px" width="18" height="18" viewBox="0 0 18 18"><use href="#i-cpu"/></svg><span class="t" style="left:94px;top:430.38px;transform:scaleX(0.9692)">AMD Ryzen 7 7735HS with Radeon Graphics</span><svg class="ic" style="left:69.5px;top:429.15px" width="18" height="18" viewBox="0 0 18 18"><use href="#i-cpu"/></svg><span class="t" style="left:94px;top:450.63px;transform:scaleX(0.9692)">AMD Ryzen 7 7735HS with Radeon Graphics</span><svg class="ic" style="left:69.5px;top:449.4px" width="18" height="18" viewBox="0 0 18 18"><use href="#i-cpu"/></svg><span class="t" style="left:94px;top:470.88px;transform:scaleX(0.9692)">AMD Ryzen 7 7735HS with Radeon Graphics</span><svg class="ic" style="left:69.5px;top:469.65px" width="18" height="18" viewBox="0 0 18 18"><use href="#i-cpu"/></svg><span class="t" style="left:94px;top:491.13px;transform:scaleX(0.9692)">AMD Ryzen 7 7735HS with Radeon Graphics</span><svg class="ic" style="left:69.5px;top:489.9px" width="18" height="18" viewBox="0 0 18 18"><use href="#i-cpu"/></svg><span class="t" style="left:94px;top:511.38px;transform:scaleX(0.9692)">AMD Ryzen 7 7735HS with Radeon Graphics</span><svg class="ic" style="left:69.5px;top:510.15px" width="18" height="18" viewBox="0 0 18 18"><use href="#i-cpu"/></svg>
    <div id="sb"><div id="thumb"></div></div>
  </div>
  <div id="rstrip"></div>
  <div id="status"><div class="sl"></div><div class="sep" style="left:629px"></div><div class="sep" style="left:779px"></div></div>
<div id="edge"></div>
</div>
</body></html>
